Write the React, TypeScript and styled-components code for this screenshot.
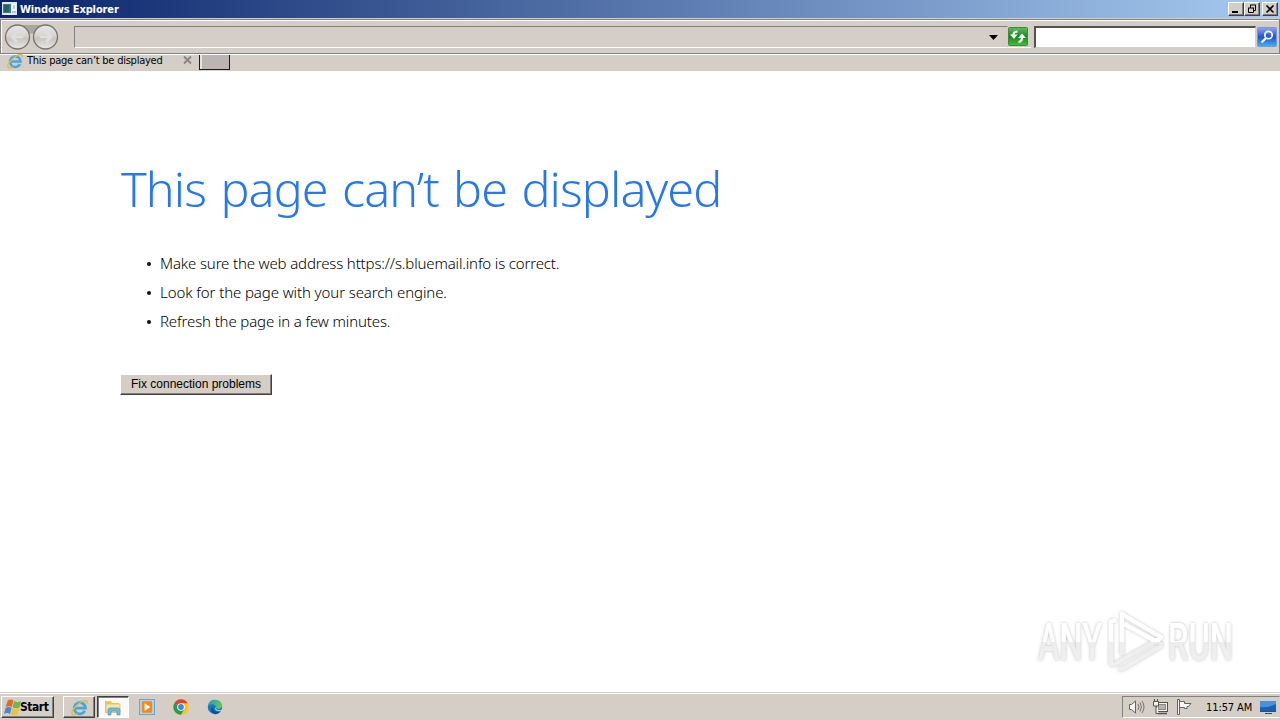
import React from 'react';
import styled, { createGlobalStyle, css } from 'styled-components';

const face = '#d5cec7';
const uiFont = '"DejaVu Sans Condensed", "DejaVu Sans", sans-serif';

const GlobalStyle = createGlobalStyle`
  * { box-sizing: border-box; }
  body { margin: 0; background: #fff; overflow: hidden; }
  svg { display: block; flex: none; }
`;

const Desktop = styled.div`
  width: 1280px;
  height: 720px;
  display: flex;
  flex-direction: column;
  position: relative;
  font-family: ${uiFont};
  font-size: 11px;
  color: #000;
  background: #fff;
`;

const TitleBar = styled.header`
  height: 18px;
  flex: none;
  display: flex;
  align-items: center;
  padding: 0 2px;
  background: linear-gradient(90deg, #0a246a, #a6caf0);
  color: #fff;
`;

const WindowTitle = styled.div`
  flex: 1;
  margin-left: 3px;
  font-weight: bold;
  line-height: 18px;
  padding-top: 1px;
  white-space: nowrap;
  font-size: 11px;
  letter-spacing: -0.12px;
`;

const raised = css`
  background: ${face};
  border: 1px solid;
  border-color: #fff #404040 #404040 #fff;
  box-shadow: inset -1px -1px 0 #808080;
`;

const CaptionButton = styled.button<{ $gap?: number }>`
  ${raised}
  width: 16px;
  height: 14px;
  padding: 0;
  margin-left: ${(p) => p.$gap ?? 0}px;
`;

const Toolbar = styled.div`
  height: 35px;
  flex: none;
  display: flex;
  align-items: center;
  margin-top: 1px;
  padding: 1px 0 0 3px;
  background: ${face};
  border: 1px solid #808080;
  box-shadow: inset 0 1px 0 #fff, inset 1px 0 0 #fff, 0 -1px 0 ${face}, 0 1px 0 #fff;
`;

const AddressBar = styled.div`
  width: 934px;
  height: 22px;
  margin-left: 15px;
  display: flex;
  align-items: center;
  justify-content: flex-end;
  padding-right: 9px;
  border: 1px solid;
  border-color: #808080 ${face} #fff #808080;
`;

const GoButton = styled.div`
  width: 23px;
  height: 22px;
  display: flex;
  align-items: center;
  border-bottom: 1px solid #fff;
`;

const SearchField = styled.div`
  width: 222px;
  height: 22px;
  margin: 0 1px 0 3px;
  background: #fff;
  border: solid;
  border-width: 2px 1px 1px 2px;
  border-color: #55524f #d4d0c8 #d4d0c8 #55524f;
`;

const TabStrip = styled.nav`
  height: 17px;
  flex: none;
  display: flex;
  align-items: flex-start;
  padding: 0 0 0 7px;
  background: ${face};
  border-top: 1px solid #fff;
`;

const Tab = styled.div`
  width: 190px;
  height: 15px;
  display: flex;
  align-items: flex-start;

  svg:first-child { margin-top: -2px; }
`;

const TabLabel = styled.span`
  width: 156px;
  margin-left: 4px;
  line-height: 11px;
  white-space: nowrap;
  letter-spacing: -0.24px;
`;

const NewTab = styled.button`
  width: 31px;
  height: 15px;
  margin: 0 0 0 2px;
  padding: 0;
  background: #bab5b0;
  border: solid;
  border-width: 0 1px 1px 1px;
  border-color: #1c1c1c;
  box-shadow: inset 2px 0 0 #e6e3df;
`;

const Page = styled.main`
  flex: 1;
  padding: 85px 0 0 120px;
  background: #fff;
`;

const Heading = styled.h1`
  margin: 0 0 0 1px;
  font: 300 48.500px/64px "Noto Sans", "Open Sans", sans-serif;
  letter-spacing: -0.9px;
  word-spacing: 2.600px;
  color: #2778ec;
  white-space: nowrap;
`;

const Tips = styled.ul`
  list-style: none;
  margin: 29px 0 0 27px;
  padding: 0;
`;

const Tip = styled.li<{ $track: number }>`
  height: 29px;
  display: flex;
  align-items: center;
  font: 300 15px/29px "Noto Sans", "Open Sans", sans-serif;
  letter-spacing: ${(p) => p.$track}px;
  white-space: nowrap;

  &::before {
    content: '';
    width: 4px;
    height: 4px;
    margin-right: 9px;
    border-radius: 50%;
    background: #111;
  }
`;

const FixButton = styled.button`
  ${raised}
  width: 152px;
  height: 21px;
  margin-top: 38px;
  padding: 0 0 1px;
  display: block;
  font: 12px/18px "Liberation Sans", Arial, sans-serif;
  color: #000;
  white-space: nowrap;
`;

const Taskbar = styled.footer`
  height: 28px;
  flex: none;
  display: flex;
  align-items: center;
  padding: 1px 0 0 1px;
  background: ${face};
  border-top: 1px solid #d4d0c8;
  box-shadow: inset 0 1px 0 #fff;
`;

const StartButton = styled.button`
  ${raised}
  width: 53px;
  height: 22px;
  padding: 0 0 0 2px;
  display: flex;
  align-items: center;
  font: bold 12px/18px ${uiFont};
  letter-spacing: -0.45px;
  color: #000;

  svg { margin-right: -1px; }
`;

const TaskButton = styled.button<{ $state?: 'open' | 'active' }>`
  width: 32px;
  height: 22px;
  margin-right: 2px;
  padding: 0;
  display: flex;
  align-items: center;
  justify-content: center;
  border: 1px solid transparent;
  background: transparent;
  ${(p) => p.$state === 'open' && raised}
  ${(p) =>
    p.$state === 'active' &&
    css`
      background: #fafafa;
      border-color: #404040 #fff #fff #404040;
      box-shadow: inset 1px 1px 0 #808080;
    `}
`;

const TaskButtons = styled.div`
  flex: 1;
  display: flex;
  margin-left: 9px;
`;

const Tray = styled.div`
  width: 158px;
  height: 22px;
  display: flex;
  align-items: center;
  gap: 7px;
  padding-left: 5px;
  border: 1px solid;
  border-color: #808080 ${face} #fff #808080;
`;

const Clock = styled.span`
  width: 47px;
  margin-left: 6px;
  white-space: nowrap;
  letter-spacing: -0.1px;
`;

const Watermark = styled.div`
  position: absolute;
  left: 1030px;
  top: 602px;
`;

const AppIcon = () => (
  <svg width="15" height="14" viewBox="0 0 15 14">
    <rect width="15" height="13" fill="#dfeaf0" />
    <rect x="1" y="2" width="8" height="9" fill="#3f7d7c" />
    <rect x="2" y="3" width="5" height="7" fill="#286067" />
    <rect x="10" y="2" width="4" height="7" fill="#f7fafc" />
    <path d="M10 10h4M12 3v4" stroke="#87a7b9" />
  </svg>
);

const NavArrows = () => (
  <svg width="55" height="28" viewBox="0 0 55 28">
    <defs>
      <linearGradient id="orb" x2="0" y2="1">
        <stop offset="0" stopColor="#e9e8e6" />
        <stop offset=".45" stopColor="#d6d4d2" />
        <stop offset=".55" stopColor="#c6c4c1" />
        <stop offset="1" stopColor="#ebe9e6" />
      </linearGradient>
    </defs>
    <path d="M13 2h28v5q-14 7-28 0z" fill="#aaa6a2" />
    <circle cx="13.500" cy="14" r="12" fill="url(#orb)" stroke="#777472" strokeWidth="1.300" />
    <circle cx="41.500" cy="14" r="12" fill="url(#orb)" stroke="#777472" strokeWidth="1.300" />
    <g fill="none" stroke="#e0dedc" strokeWidth="2.500">
      <path d="M19 14H8M13 9l-5 5 5 5" />
      <path d="M36 14h11M42 9l5 5-5 5" />
    </g>
  </svg>
);

const RefreshIcon = () => (
  <svg width="20" height="19" viewBox="0 0 20 19">
    <defs>
      <linearGradient id="green" x2="0" y2="1">
        <stop offset="0" stopColor="#65ba62" />
        <stop offset=".5" stopColor="#148b1b" />
        <stop offset="1" stopColor="#45bd3c" />
      </linearGradient>
    </defs>
    <rect x=".5" y=".5" width="19" height="18" rx="1" fill="url(#green)" stroke="#3b8b3c" />
    <path d="M9.500 4.500Q5.500 4.500 5.500 8" fill="none" stroke="#fff" strokeWidth="2.200" />
    <path d="M2 7.500h7.500L6 12z" fill="#fff" />
    <path d="M10.500 15q3.500-.5 3.500-4" fill="none" stroke="#fff" strokeWidth="2.200" />
    <path d="M10 11h8l-4-4.500z" fill="#fff" />
  </svg>
);

const SearchIcon = () => (
  <svg width="20" height="20" viewBox="0 0 20 20">
    <defs>
      <linearGradient id="blue" x2="0" y2="1">
        <stop offset="0" stopColor="#91a9ef" />
        <stop offset=".5" stopColor="#2450d2" />
        <stop offset="1" stopColor="#3bb9ee" />
      </linearGradient>
    </defs>
    <rect x=".5" y=".5" width="19" height="19" rx="1" fill="url(#blue)" stroke="#7897d8" />
    <circle cx="11.500" cy="8" r="3.700" fill="none" stroke="#fff" strokeWidth="1.700" />
    <path d="M9 11l-4.500 4.500" stroke="#fff" strokeWidth="2.300" />
  </svg>
);

const IEIcon = ({ size = 17 }: { size?: number }) => (
  <svg width={size} height={size} viewBox="0 0 16 16">
    <path d="M13 11.200A5.300 5.300 0 1 1 13.600 8.500H4" fill="none" stroke="#43a8df" strokeWidth="2.600" />
    <path d="M1.200 14.500C-1 10.500 9 1.500 14 1.500q2 .4 .7 3M1.200 14.500q2 1.300 5-.8" fill="none" stroke="#dfba4a" strokeWidth="1.300" />
  </svg>
);

const FlagIcon = () => (
  <svg width="17" height="17" viewBox="0 0 16 16">
    <path d="M3.500 1.500q3-2 5.300 0L7.300 7.500q-2.500-1.500-5.700 0z" fill="#e4672a" />
    <path d="M9.500 1.900q3 2 6.500 0l-1.500 6q-3 1.800-6.500-.2z" fill="#76b643" />
    <path d="M1.400 8.400q3-1.700 5.700 0l-1.500 5.700q-2.500-1.700-5.500 0z" fill="#428bd0" />
    <path d="M7.800 8.700q3 2 6.500.3L12.800 14.700q-3 1.500-6.500-.2z" fill="#f1c13a" />
  </svg>
);

const FolderIcon = () => (
  <svg width="18" height="17" viewBox="0 0 18 17">
    <path d="M1 2h6l1 2h7v10H1z" fill="#e6c765" />
    <path d="M2 5h14v8H2z" fill="#f8e8a7" stroke="#d7bd65" strokeWidth=".7" />
    <path d="M4 16v-5q0-2 2-2h8q2 0 2 2v5h-3v-4H7v4z" fill="#77bce0" stroke="#4c91bb" strokeWidth=".7" />
  </svg>
);

const MediaIcon = () => (
  <svg width="16" height="16" viewBox="0 0 17 17">
    <rect x=".5" y=".5" width="16" height="16" fill="#b4d3ea" stroke="#64a2cf" />
    <rect x="3" y="2.500" width="11" height="12" rx="1" fill="#f28b1d" />
    <path d="M6 4.500l6 4-6 4z" fill="#fff" />
  </svg>
);

const ChromeIcon = () => (
  <svg width="16" height="16" viewBox="0 0 16 16">
    <circle cx="8" cy="8" r="7.700" fill="#f8c51c" />
    <path d="M8 8L1.300 4.200A7.700 7.700 0 0 1 14.700 4.200H8z" fill="#e34133" />
    <path d="M1.300 4.200A7.700 7.700 0 0 0 8 15.700l3.300-5.800L8 8z" fill="#299b49" />
    <circle cx="8" cy="8" r="3.800" fill="#fff" />
    <circle cx="8" cy="8" r="2.900" fill="#4285e8" />
  </svg>
);

const EdgeIcon = () => (
  <svg width="16" height="16" viewBox="0 0 17 16">
    <defs>
      <linearGradient id="edge" x2="1" y2=".4">
        <stop offset="0" stopColor="#2598d3" />
        <stop offset="1" stopColor="#61c84d" />
      </linearGradient>
    </defs>
    <circle cx="8.500" cy="8" r="7.700" fill="#1677c5" />
    <path d="M1 7C2-2 15-1 16 6q.3 4-4 4-3 0-2.500-2Q9 5 5.500 5 2.500 5 1 7z" fill="url(#edge)" />
    <path d="M6 7q-1 6 5 6 2.500 0 4-1Q11.500 17 7 15 2 12 6 7z" fill="#0c4f99" />
    <path d="M9.500 8q-.5 3.500 3.500 3.500 2 0 4-2v2.500l-2 .2q-5 1-6.500-2.200z" fill="#d5cec7" />
  </svg>
);

const SpeakerIcon = () => (
  <svg width="17" height="16" viewBox="0 0 17 16">
    <path d="M1.500 5.500h2l4-3.500v12l-4-3.500h-2z" fill="#f8f7f5" stroke="#66625f" />
    <path d="M10 5q2 3 0 6M12 3.500q3 4.500 0 9M14 2q4 6 0 12" fill="none" stroke="#77736f" />
  </svg>
);

const NetworkIcon = () => (
  <svg width="17" height="16" viewBox="0 0 17 16">
    <rect x="4.500" y="3.500" width="11" height="9" fill="#f5f3f0" stroke="#55524f" />
    <rect x="6.500" y="5.500" width="7" height="5" fill="#b7b3ae" stroke="#8a8682" />
    <path d="M6 14.500h9" stroke="#55524f" strokeWidth="1.500" />
    <path d="M1.500 2.500h5v4.500h-5zM2.500 0v2M5.500 0v2M4 7v7.500h3" fill="#f5f3f0" stroke="#55524f" />
  </svg>
);

const ActionFlagIcon = () => (
  <svg width="17" height="16" viewBox="0 0 17 16">
    <path d="M1.500 .5h2v15h-2z" fill="#f8f7f5" stroke="#66625f" />
    <path d="M3.500 2.500h5v2h6.500l-2.500 3h-1.500v2H8.500v-1h-5z" fill="#f8f7f5" stroke="#66625f" />
  </svg>
);

const DisplayIcon = () => (
  <svg width="16" height="15" viewBox="0 0 16 15">
    <path d="M0 1h16v10H0z" fill="#1d5fb5" />
    <path d="M0 1h16v3Q8 8 0 7z" fill="#4a91dc" />
    <path d="M0 11.500h16M5 13.500h7" stroke="#314f71" />
  </svg>
);

const AnyRunLogo = () => (
  <svg width="240" height="84" viewBox="0 0 240 84">
    <defs>
      <linearGradient id="mark" gradientUnits="userSpaceOnUse" x1="0" y1="20" x2="0" y2="60">
        <stop offset="0" stopColor="#fff" />
        <stop offset=".5" stopColor="#fdfdfd" />
        <stop offset=".51" stopColor="#ededed" />
        <stop offset="1" stopColor="#f0f0f0" />
      </linearGradient>
      <filter id="halo" x="-10%" y="-10%" width="120%" height="120%">
        <feDropShadow dx="0" dy="0" stdDeviation="1.800" floodColor="#777" floodOpacity=".5" />
      </filter>
    </defs>
    <g filter="url(#halo)">
      <g fill="url(#mark)" fontFamily="Roboto, sans-serif" fontSize="51" fontWeight="500">
        <text x="8" y="58" textLength="64" lengthAdjust="spacingAndGlyphs">ANY</text>
        <text x="138" y="58" textLength="65" lengthAdjust="spacingAndGlyphs">RUN</text>
      </g>
      <g fill="none" stroke="url(#mark)" strokeWidth="4.300" strokeLinejoin="round">
        <path d="M92 53V12L131 35l-4 5L94 22" />
        <path d="M86 18l-5 1.500v42q2 2 6-.500l42-24" />
        <path d="M89 66q2 2 6-.500L131 44v-4" />
      </g>
    </g>
  </svg>
);

export default function App() {
  return (
    <>
      <GlobalStyle />
      <Desktop>
        <TitleBar>
          <AppIcon />
          <WindowTitle>Windows Explorer</WindowTitle>
          <CaptionButton aria-label="Minimize">
            <svg width="14" height="12"><path d="M3 9h6" stroke="#000" strokeWidth="2" /></svg>
          </CaptionButton>
          <CaptionButton aria-label="Restore">
            <svg width="14" height="12" fill="none" stroke="#000"><path d="M5 2h6M5.500 2v3M10.500 2v5.500H8M3 5h6M3.500 5v4.500h5V5" /></svg>
          </CaptionButton>
          <CaptionButton $gap={2} aria-label="Close">
            <svg width="14" height="12"><path d="M3.500 2.500l7 7M10.500 2.500l-7 7" stroke="#000" strokeWidth="1.600" /></svg>
          </CaptionButton>
        </TitleBar>
        <Toolbar>
          <NavArrows />
          <AddressBar>
            <svg width="9" height="5"><path d="M0 0h9L4.500 5z" /></svg>
          </AddressBar>
          <GoButton><RefreshIcon /></GoButton>
          <SearchField />
          <SearchIcon />
        </Toolbar>
        <TabStrip>
          <Tab>
            <IEIcon size={16} />
            <TabLabel>This page can’t be displayed</TabLabel>
            <svg width="9" height="10"><path d="M1 1.500l7 7M8 1.500l-7 7" stroke="#88837f" strokeWidth="1.800" /></svg>
          </Tab>
          <NewTab aria-label="New tab" />
        </TabStrip>
        <Page>
          <Heading>This page can’t be displayed</Heading>
          <Tips>
            <Tip $track={-0.15}>Make sure the web address https://s.bluemail.info is correct.</Tip>
            <Tip $track={-0.1}>Look for the page with your search engine.</Tip>
            <Tip $track={-0.13}>Refresh the page in a few minutes.</Tip>
          </Tips>
          <FixButton>Fix connection problems</FixButton>
        </Page>
        <Taskbar>
          <StartButton><FlagIcon />Start</StartButton>
          <TaskButtons>
            <TaskButton $state="open" aria-label="Internet Explorer"><IEIcon /></TaskButton>
            <TaskButton $state="active" aria-label="Files"><FolderIcon /></TaskButton>
            <TaskButton aria-label="Media player"><MediaIcon /></TaskButton>
            <TaskButton aria-label="Chrome"><ChromeIcon /></TaskButton>
            <TaskButton aria-label="Edge"><EdgeIcon /></TaskButton>
          </TaskButtons>
          <Tray>
            <SpeakerIcon />
            <NetworkIcon />
            <ActionFlagIcon />
            <Clock>11:57 AM</Clock>
            <DisplayIcon />
          </Tray>
        </Taskbar>
        <Watermark><AnyRunLogo /></Watermark>
      </Desktop>
    </>
  );
}
